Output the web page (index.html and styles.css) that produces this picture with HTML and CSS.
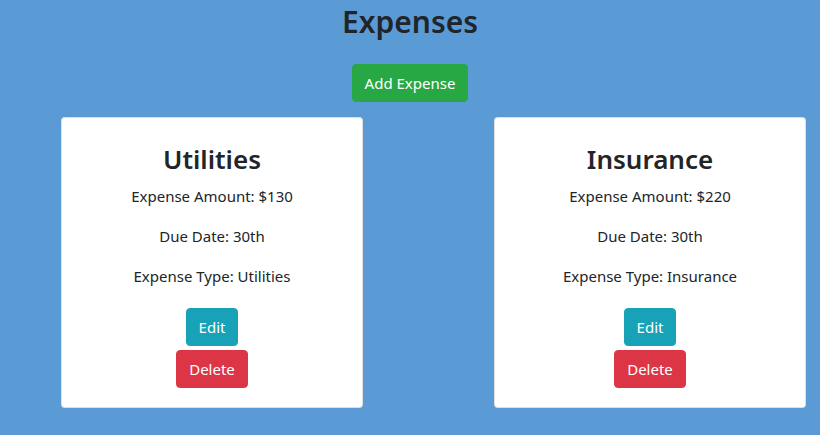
FILE: index.html
```html
<!DOCTYPE html>
<html lang="en">
<head>
<meta charset="utf-8">
<title>Expenses</title>
<link rel="stylesheet" href="styles.css">
</head>
<body>
<h1 class="page-title">Expenses</h1>
<div class="add-row"><button class="btn btn-green">Add Expense</button></div>
<div class="cards">
  <div class="card card-a">
    <h2 class="card-title">Utilities</h2>
    <p class="line">Expense Amount: $130</p>
    <p class="line">Due Date: 30th</p>
    <p class="line">Expense Type: Utilities</p>
    <div class="actions">
      <button class="btn btn-teal">Edit</button>
      <button class="btn btn-red">Delete</button>
    </div>
  </div>
  <div class="card card-b">
    <h2 class="card-title">Insurance</h2>
    <p class="line">Expense Amount: $220</p>
    <p class="line">Due Date: 30th</p>
    <p class="line">Expense Type: Insurance</p>
    <div class="actions">
      <button class="btn btn-teal">Edit</button>
      <button class="btn btn-red">Delete</button>
    </div>
  </div>
</div>
</body>
</html>
```
FILE: styles.css
```css
html, body {
  margin: 0;
  padding: 0;
}
body {
  background: #5b9bd5;
  color: #212529;
  font-family: "Noto Sans", "Open Sans", sans-serif;
  font-size: 15px;
  line-height: 1.5;
}
.page-title {
  margin: 0;
  padding-top: 2px;
  text-align: center;
  font-size: 30px;
  font-weight: 600;
  line-height: 40px;
}
.add-row {
  display: flex;
  justify-content: center;
  margin-top: 22px;
}
.btn {
  box-sizing: border-box;
  height: 38px;
  font-family: inherit;
  font-size: 15px;
  line-height: 24px;
  color: #fff;
  border: 1px solid transparent;
  border-radius: 4px;
  padding: 6px 12px;
  cursor: pointer;
}
.btn-green { background: #28a745; border-color: #28a745; }
.btn-teal { background: #17a2b8; border-color: #17a2b8; }
.btn-red { background: #dc3545; border-color: #dc3545; }
.cards {
  display: flex;
  align-items: flex-start;
  padding-left: 61px;
  gap: 131px;
  margin-top: 15px;
}
.card {
  box-sizing: border-box;
  background: #fff;
  border: 1px solid rgba(0,0,0,.125);
  border-radius: 4px;
  text-align: center;
  padding: 22px 10px 19px;
}
.card-a { width: 302px; }
.card-b { width: 312px; }
.card-title {
  margin: 0 0 6px;
  font-size: 26px;
  font-weight: 600;
  line-height: 38px;
}
.line {
  margin: 0 0 16px;
  line-height: 24px;
}
.actions {
  display: flex;
  flex-direction: column;
  align-items: center;
  gap: 4px;
  margin-top: 20px;
}
```
